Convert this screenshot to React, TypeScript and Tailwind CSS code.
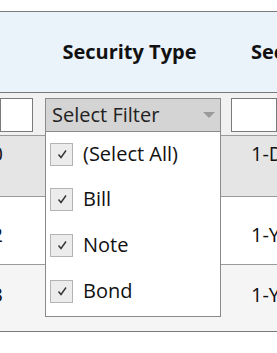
import React from "react";

const font = { fontFamily: '"Open Sans", "Noto Sans", sans-serif' };

function Check() {
  return (
    <div className="w-[23px] h-[23px] border border-[#b4b4b4] bg-[#ececec] flex items-center justify-center shrink-0">
      <svg width="12" height="12" viewBox="0 0 12 12">
        <path d="M2.5 6.5 L5 9.5 L10 2.5" fill="none" stroke="#333" strokeWidth="1.4" />
      </svg>
    </div>
  );
}

const options = ["(Select All)", "Bill", "Note", "Bond"];

export default function App() {
  return (
    <div className="relative w-[277px] h-[353px] overflow-hidden bg-white text-[#111]" style={font}>
      <div className="h-[11px]" />
      {/* header */}
      <div className="grid grid-cols-[39px_187px_1fr] h-[82px] border-y border-[#7a7a7a] bg-[#eaf2fa]">
        <div />
        <div className="flex items-center justify-center pr-[6px] text-[20px] font-bold whitespace-nowrap overflow-hidden">Security Type</div>
        <div className="flex items-center pl-[25px] text-[20px] font-bold whitespace-nowrap">Security Term</div>
      </div>
      {/* filter row */}
      <div className="grid grid-cols-[39px_187px_1fr] h-[43px] bg-[#f1f1f1] border-b border-[#9a9a9a]">
        <div className="pt-[5px]">
          <div className="h-[34px] w-[33px] bg-white border border-[#7a7a7a]" />
        </div>
        <div className="pt-[5px] pl-[6px] pr-[5px]">
          <div className="h-[34px] bg-[#d4d4d4] border border-[#8a8a8a] flex items-center justify-between pl-[6px] pr-[5px]">
            <span className="text-[20px] text-[#222] leading-none whitespace-nowrap">Select Filter</span>
            <svg width="12" height="7" viewBox="0 0 12 7">
              <path d="M0 0 L12 0 L6 6 Z" fill="#9a9a9a" />
            </svg>
          </div>
        </div>
        <div className="pt-[5px] pl-[5px]">
          <div className="h-[34px] bg-white border border-[#7a7a7a]" />
        </div>
      </div>
      {/* data rows */}
      <div className="grid grid-cols-[39px_187px_1fr] h-[61px] bg-[#e5e5e5] border-b border-[#9a9a9a] text-[20px]">
        <div className="flex justify-end pt-[3px] pr-[36px] whitespace-nowrap">0</div>
        <div />
        <div className="pt-[3px] pl-[25px] whitespace-nowrap">1-Day</div>
      </div>
      <div className="grid grid-cols-[39px_187px_1fr] h-[68px] bg-white border-b border-[#9a9a9a] text-[20px]">
        <div className="flex justify-end pt-[23px] pr-[36px] whitespace-nowrap">2</div>
        <div />
        <div className="pt-[23px] pl-[25px] whitespace-nowrap">1-Year</div>
      </div>
      <div className="grid grid-cols-[39px_187px_1fr] h-[67px] bg-[#f5f5f5] border-b border-[#7a7a7a] text-[20px]">
        <div className="flex justify-end pt-[15px] pr-[36px] whitespace-nowrap">3</div>
        <div />
        <div className="pt-[15px] pl-[25px] whitespace-nowrap">1-Year</div>
      </div>
      {/* dropdown */}
      <div className="absolute left-[45px] top-[131px] w-[176px] h-[186px] bg-white border border-[#8a8a8a] flex flex-col">
        {options.map((o, i) => (
          <div key={o} className={`flex items-center gap-[10px] pl-[4px] ${i === 0 ? "h-[44px]" : "h-[46px]"}`}>
            <Check />
            <span className="text-[20px] text-[#111] leading-none whitespace-nowrap">{o}</span>
          </div>
        ))}
      </div>
    </div>
  );
}
